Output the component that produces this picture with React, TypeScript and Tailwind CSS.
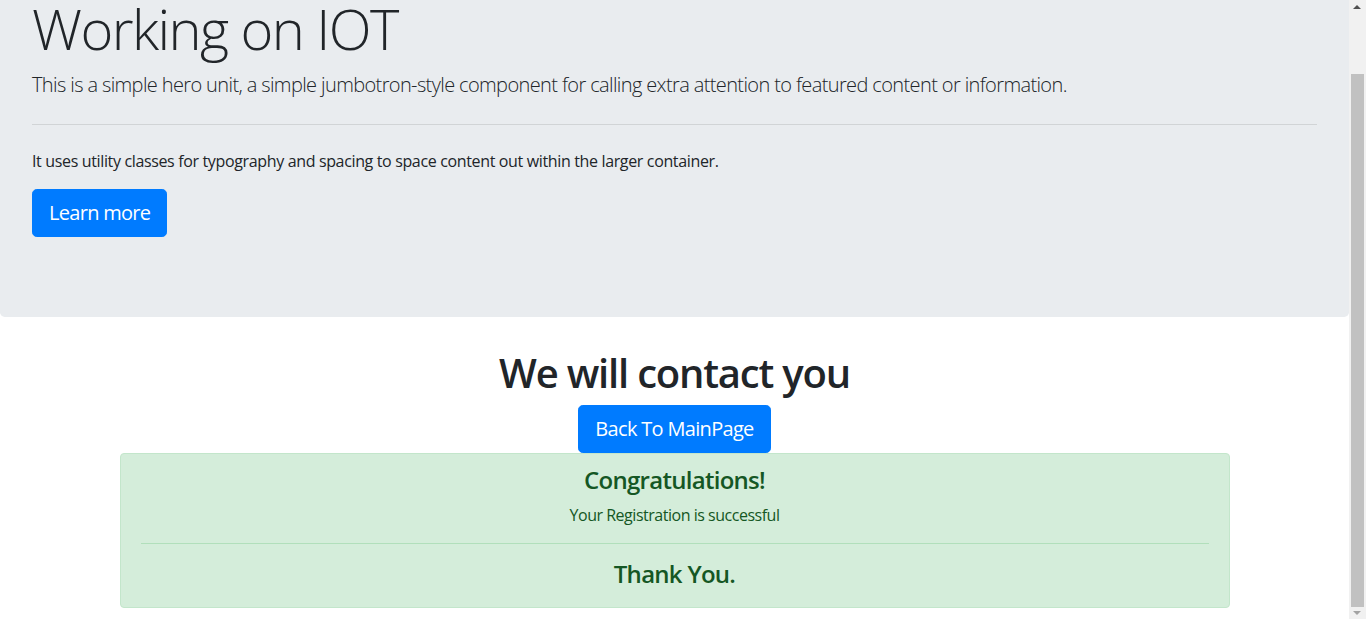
import { useEffect } from "react"

// the reference shows a classic scrollbar; headless chrome hides it, so draw one
function FakeScrollbar() {
  return (
    <div className="fixed top-0 right-0 w-[17px] h-screen bg-[#f1f1f1]">
      <div className="absolute top-[5px] left-[4px] w-0 h-0 border-l-[4px] border-r-[4px] border-b-[4px] border-l-transparent border-r-transparent border-b-[#505050]" />
      <div className="absolute top-[74px] left-[2px] w-[13px] h-[533px] bg-[#c1c1c1]" />
      <div className="absolute bottom-[4px] left-[4px] w-0 h-0 border-l-[4px] border-r-[4px] border-t-[4px] border-l-transparent border-r-transparent border-t-[#a3a3a3]" />
    </div>
  )
}

export default function App() {
  // the reference is photographed scrolled a little way down the page
  useEffect(() => {
    window.scrollTo(0, 69)
  }, [])

  return (
    <div className="font-['Open_Sans',sans-serif] text-[#212529] bg-white">
      <div className="mr-[17px]">
        <div className="bg-[#e9ecef] rounded-[0.3rem] px-8 py-16 mb-8">
          <h1 className="text-[56px] font-light leading-[1.2] mb-2 tracking-[-0.028em]">Working on IOT</h1>
          <p className="text-[20px] font-light leading-[1.5] mb-4 tracking-[-0.031em]">
            This is a simple hero unit, a simple jumbotron-style component for calling extra attention to featured content or information.
          </p>
          <hr className="my-6 border-0 border-t border-black/10" />
          <p className="text-base leading-6 mb-4 tracking-[-0.022em]">
            It uses utility classes for typography and spacing to space content out within the larger container.
          </p>
          <div className="flex mb-4">
            <a className="inline-block bg-[#007bff] border border-[#007bff] text-white text-[20px] leading-[1.5] px-4 py-2 rounded-[0.3rem] cursor-pointer tracking-[-0.035em]">
              Learn more
            </a>
          </div>
        </div>

        <div className="max-w-[1140px] mx-auto px-[15px] text-center">
          <h1 className="text-[40px] font-semibold leading-[1.2] mb-2 tracking-[-0.03em]">We will contact you</h1>
          <div className="flex justify-center">
            <a className="inline-block bg-[#007bff] border border-[#007bff] text-white text-[20px] leading-[1.5] px-4 py-2 rounded-[0.3rem] cursor-pointer tracking-[-0.034em]">
              Back To MainPage
            </a>
          </div>
          <div className="bg-[#d4edda] border border-[#c3e6cb] text-[#155724] rounded-[0.25rem] px-5 py-3 mb-4">
            <h4 className="text-[24px] font-semibold leading-[1.2] mb-2 tracking-[-0.03em]">Congratulations!</h4>
            <p className="text-base leading-6 mb-4 tracking-[-0.03em]">Your Registration is successful</p>
            <hr className="my-4 border-0 border-t border-[#b1dfbb]" />
            <h4 className="text-[24px] font-semibold leading-[1.2] mb-[6px] tracking-[-0.03em]">Thank You.</h4>
          </div>
        </div>
      </div>
      <FakeScrollbar />
    </div>
  )
}
